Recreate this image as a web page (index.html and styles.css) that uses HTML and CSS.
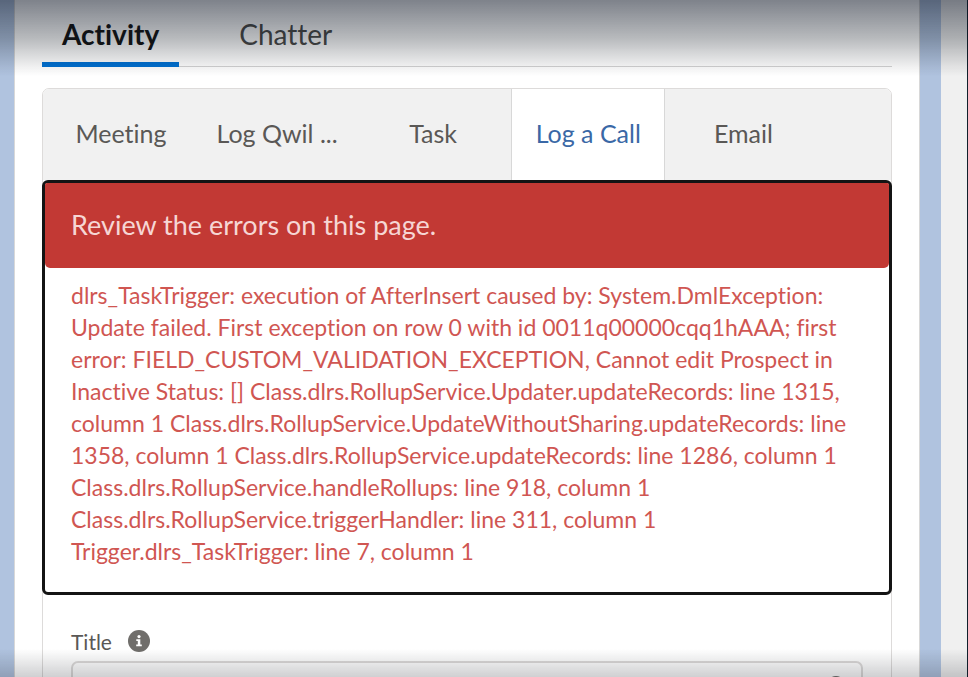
FILE: index.html
```html
<!DOCTYPE html>
<html lang="en">
<head>
<meta charset="utf-8">
<title>Activity</title>
<link rel="stylesheet" href="styles.css">
</head>
<body>
<div class="page">
  <main class="card">
    <nav class="tabs">
      <a class="tab tab-active" href="#activity" aria-current="page">Activity</a>
      <a class="tab" href="#chatter">Chatter</a>
    </nav>
    <section class="composer">
      <div class="actions">
        <button class="action" type="button">Meeting</button>
        <button class="action" type="button">Log Qwil ...</button>
        <button class="action" type="button">Task</button>
        <button class="action action-active" type="button">Log a Call</button>
        <button class="action" type="button">Email</button>
      </div>
      <div class="errors" role="alert">
        <h2 class="errors-title">Review the errors on this page.</h2>
        <p class="errors-text">dlrs_TaskTrigger: execution of AfterInsert caused by: System.DmlException:<br>
        Update failed. First exception on row 0 with id 0011q00000cqq1hAAA; first<br>
        error: FIELD_CUSTOM_VALIDATION_EXCEPTION, Cannot edit Prospect in<br>
        Inactive Status: [] Class.dlrs.RollupService.Updater.updateRecords: line 1315,<br>
        column 1 Class.dlrs.RollupService.UpdateWithoutSharing.updateRecords: line<br>
        1358, column 1 Class.dlrs.RollupService.updateRecords: line 1286, column 1<br>
        Class.dlrs.RollupService.handleRollups: line 918, column 1<br>
        Class.dlrs.RollupService.triggerHandler: line 311, column 1<br>
        Trigger.dlrs_TaskTrigger: line 7, column 1</p>
      </div>
      <div class="field">
        <div class="field-head">
          <label class="field-label" for="title">Title</label>
          <svg class="info" viewBox="0 0 22 22" aria-hidden="true">
            <circle cx="11" cy="11" r="11" fill="#706e6b"/>
            <circle cx="11" cy="6.6" r="1.6" fill="#fff"/>
            <path d="M8.3 9.2h4v5.3h1.5v1.8H8.2v-1.8h1.6V11H8.3z" fill="#fff"/>
          </svg>
        </div>
        <div class="field-box">
          <input class="field-input" id="title" type="text">
          <svg class="search" viewBox="0 0 22 22" aria-hidden="true">
            <circle cx="9" cy="9" r="7.5" fill="none" stroke="#706e6b" stroke-width="3"/>
            <path d="M14.5 14.5l6 6" stroke="#706e6b" stroke-width="3"/>
          </svg>
        </div>
      </div>
    </section>
  </main>
  <aside class="side"></aside>
</div>
</body>
</html>
```
FILE: styles.css
```css
* {
  box-sizing: border-box;
}

body {
  margin: 0;
  background: #b0c3df;
  color: #5a5856;
  font-family: Lato, "Liberation Sans", sans-serif;
  font-size: 22px;
  font-variant-ligatures: none;
}

.page {
  display: flex;
  gap: 21px;
  height: 100vh;
  padding-left: 14px;
  overflow: hidden;
}

.page::before,
.page::after {
  content: "";
  position: fixed;
  left: 0;
  right: 0;
  z-index: 1;
  pointer-events: none;
}

.page::before {
  top: 0;
  height: 76px;
  background: linear-gradient(rgba(8, 16, 32, 0.52), rgba(8, 16, 26, 0.29) 50%, rgba(8, 12, 20, 0.07) 86%, rgba(8, 12, 20, 0));
}

.page::after {
  bottom: 0;
  height: 28px;
  background: linear-gradient(rgba(16, 20, 28, 0), rgba(16, 20, 28, 0.2));
}

.card {
  flex: 1;
  padding: 0 27px;
  background: #fff;
  border: solid #d8d8d8;
  border-width: 0 1px;
}

.side {
  width: 27px;
  background: #f0f0f0;
  border-right: 1px solid #10202c;
}

.tabs {
  display: flex;
  gap: 36px;
  height: 67px;
  border-bottom: 1px solid #d4d4d4;
}

.tab {
  height: 67px;
  padding: 0 24px;
  color: #4a4a48;
  font-size: 28px;
  line-height: 69px;
  text-decoration: none;
}

.tab-active {
  padding: 0 20px;
  border-bottom: 5px solid #0070d2;
  color: #141414;
  font-weight: 700;
}

.composer {
  margin-top: 21px;
  border: 1px solid #dddbda;
  border-radius: 7px 7px 0 0;
}

.actions {
  display: flex;
  height: 91px;
  background: #f1f1f1;
  border-radius: 6px 6px 0 0;
}

.action {
  flex: 0 0 18.4%;
  padding: 0 0 3px;
  background: none;
  border: 0;
  color: #5a5856;
  font: inherit;
  font-size: 25px;
}

.action-active {
  flex-basis: 18.2%;
  background: #fff;
  border: solid #d8d8d8;
  border-width: 0 1px;
  color: #3a68a6;
}

.errors {
  margin: 0 -1px;
  border: 3px solid #141414;
  border-radius: 6px;
  background: #fff;
}

.errors-title {
  margin: 0;
  padding: 0 26px 2px;
  background: #c23934;
  border-radius: 2px 2px 5px 5px;
  color: #f6d6d4;
  font-size: 27px;
  font-weight: 400;
  line-height: 83px;
}

.errors-text {
  margin: 0;
  padding: 11px 0 25px 26px;
  color: #d05652;
  font-size: 23px;
  line-height: 32px;
  white-space: nowrap;
}

.field {
  padding: 32px 28px 0;
}

.field-head {
  display: flex;
  align-items: center;
  gap: 16px;
  height: 28px;
}

.field-label {
  font-size: 21px;
}

.info {
  width: 22px;
  height: 22px;
}

.field-box {
  position: relative;
  margin-top: 6px;
}

.field-input {
  display: block;
  width: 100%;
  height: 52px;
  padding: 0 48px 0 20px;
  background: #fff;
  border: 2px solid #dddbda;
  border-radius: 7px;
  color: #3e3e3c;
  font: inherit;
}

.search {
  position: absolute;
  top: 15px;
  right: 14px;
  width: 22px;
  height: 22px;
}
```
